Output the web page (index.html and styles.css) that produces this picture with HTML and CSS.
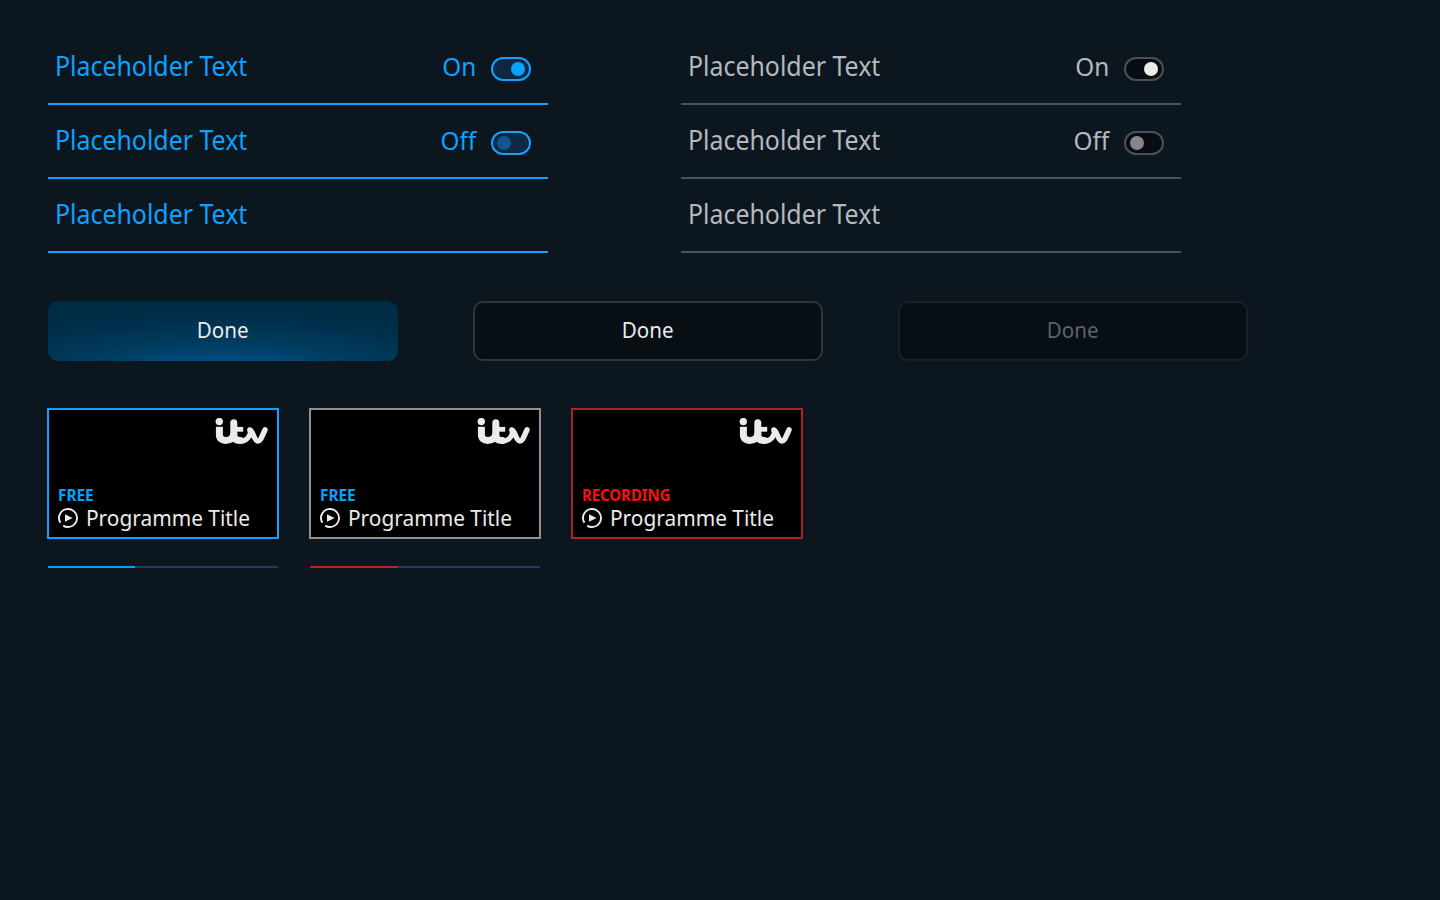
FILE: index.html
```html
<!DOCTYPE html>
<html lang="en">
<head>
<meta charset="utf-8">
<title>Components</title>
<link rel="stylesheet" href="styles.css">
</head>
<body>
<svg class="defs" width="0" height="0" aria-hidden="true">
  <symbol id="itv" viewBox="0 0 53 27">
    <circle cx="4.3" cy="3.6" r="3.7" fill="#ebebeb"/>
    <g fill="none" stroke="#ebebeb" stroke-linejoin="round">
      <path stroke-width="7" d="M4.4 8.8V16.5C4.4 20.5 6.8 22.4 10.6 22.4C15.6 22.4 18.8 20 18.8 15"/>
      <path stroke-width="7" stroke-linecap="round" d="M18.8 4.8V16.5C18.8 20.5 21 22.6 25.4 22.6"/>
      <path stroke-width="4.8" d="M18 11.3H28.2"/>
      <path stroke-width="5" d="M24 23.4C30.4 23.4 35 20 35.6 13"/>
      <path stroke-width="5.4" stroke-linecap="round" d="M34.8 12C37.6 12.4 39.4 23 43 23C45.6 23 46.4 19.6 50 11.8"/>
    </g>
  </symbol>
  <symbol id="play" viewBox="0 0 20 20">
    <path d="M5.2 17.6A9 9 0 1 0 2.4 14.8" fill="none" stroke="#ebebeb" stroke-width="1.9"/>
    <path d="M7 6.2L14.6 10L7 13.8Z" fill="#ebebeb"/>
  </symbol>
</svg>
<main class="page">
  <div class="lists">
    <ul class="list focused">
      <li class="row"><span class="label">Placeholder Text</span><span class="state">On</span><span class="toggle on"></span></li>
      <li class="row"><span class="label">Placeholder Text</span><span class="state">Off</span><span class="toggle"></span></li>
      <li class="row"><span class="label">Placeholder Text</span></li>
    </ul>
    <ul class="list">
      <li class="row"><span class="label">Placeholder Text</span><span class="state">On</span><span class="toggle on"></span></li>
      <li class="row"><span class="label">Placeholder Text</span><span class="state">Off</span><span class="toggle"></span></li>
      <li class="row"><span class="label">Placeholder Text</span></li>
    </ul>
  </div>
  <div class="buttons">
    <button class="btn active"><span>Done</span></button>
    <button class="btn"><span>Done</span></button>
    <button class="btn disabled"><span>Done</span></button>
  </div>
  <div class="cards">
    <div class="column">
      <article class="card blue">
        <svg class="logo"><use href="#itv"/></svg>
        <div class="tag"><span>FREE</span></div>
        <div class="title"><svg class="play"><use href="#play"/></svg><span>Programme Title</span></div>
      </article>
      <div class="progress"><div class="fill"></div></div>
    </div>
    <div class="column">
      <article class="card">
        <svg class="logo"><use href="#itv"/></svg>
        <div class="tag"><span>FREE</span></div>
        <div class="title"><svg class="play"><use href="#play"/></svg><span>Programme Title</span></div>
      </article>
      <div class="progress red"><div class="fill"></div></div>
    </div>
    <div class="column">
      <article class="card recording">
        <svg class="logo"><use href="#itv"/></svg>
        <div class="tag"><span>RECORDING</span></div>
        <div class="title"><svg class="play"><use href="#play"/></svg><span>Programme Title</span></div>
      </article>
    </div>
  </div>
</main>
</body>
</html>
```

FILE: styles.css
```css
* { box-sizing: border-box; }
body { margin: 0; height: 900px; overflow: hidden; background: #0c161e; font-family: "Noto Sans", sans-serif; color: #ebebeb; }
.defs { display: block; }
.page { padding: 31px 47px 0 48px; }
.lists { display: flex; gap: 133px; }
.list { width: 500px; margin: 0; padding: 0; list-style: none; color: #b5b8bf; }
.list.focused { color: #0da2ff; }
.row { display: flex; align-items: center; height: 74px; padding: 0 17px 0 7px; border-bottom: 2px solid #4c525a; font-size: 26px; line-height: 36px; white-space: nowrap; }
.focused .row { border-color: #17a0fc; }
.label { flex: 1; margin-bottom: 2px; font-size: 26.5px; transform: scaleX(.94); transform-origin: left; }
.state { margin: 0 15px 2px 0; transform: scaleX(.935); transform-origin: right; }
.toggle { display: flex; align-items: center; width: 40px; height: 24px; padding: 0 4px; border: 2px solid #4c4f55; border-radius: 12px; background: #070d13; margin-top: 4px; }
.toggle::before { content: ""; width: 14px; height: 14px; border-radius: 50%; background: #85868a; }
.toggle.on { justify-content: flex-end; }
.toggle.on::before { background: #ebebeb; }
.focused .toggle { border-color: #17a0fc; background: #0d2840; }
.focused .toggle::before { background: #125593; }
.focused .toggle.on::before { background: #03a3ff; }
.buttons { display: flex; gap: 75px; margin-top: 48px; }
.btn { width: 350px; height: 60px; padding: 0 0 4px; border: 2px solid #303539; border-radius: 10px; background: #070e14; color: #ebebeb; font-family: inherit; font-size: 22px; line-height: 30px; }
.btn span { display: inline-block; transform: scaleX(.935); }
.btn.active { padding: 2px 2px 6px; border: 0; background: radial-gradient(ellipse 85% 100% at 50% 115%, #005189 0%, #004c80 15%, #003a5c 50%, #002b45 100%); }
.btn.disabled { border-color: #1c2127; color: #5e6368; }
.cards { display: flex; gap: 30px; margin: 47px 0 0 -1px; }
.column { width: 232px; }
.card { display: flex; flex-direction: column; height: 131px; padding: 8px 9px 6px; border: 2px solid #919191; background: #000; }
.card.blue { border-color: #0da2ff; }
.card.recording { border-color: #ac2422; }
.logo { align-self: flex-end; width: 53px; height: 27px; }
.tag { margin-top: auto; height: 20px; color: #03a3ff; font-size: 16px; line-height: 20px; font-weight: 700; white-space: nowrap; }
.tag span, .title span { display: inline-block; transform-origin: left; }
.tag span { transform: scaleX(.96); }
.recording .tag span { transform: scaleX(.93); }
.title span { margin-bottom: 2px; transform: scaleX(.948); }
.recording .tag { color: #ff0f12; }
.title { display: flex; align-items: center; gap: 8px; height: 26px; font-size: 22px; line-height: 26px; white-space: nowrap; }
.play { flex: none; width: 20px; height: 20px; }
.progress { width: 230px; height: 2px; margin: 27px 0 0 1px; background: #213b60; }
.fill { width: 38%; height: 2px; background: #03a3ff; }
.red .fill { background: #b9251e; }
```
